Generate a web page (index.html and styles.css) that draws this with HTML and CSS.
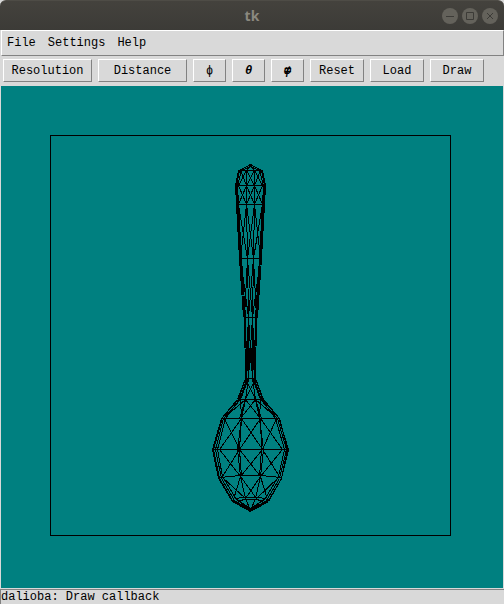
FILE: index.html
```html
<!DOCTYPE html>
<html lang="en">
<head>
<meta charset="utf-8">
<title>tk</title>
<link rel="stylesheet" href="styles.css">
</head>
<body>
<header class="titlebar">
  <h1 class="title">tk</h1>
  <div class="window-controls">
    <button class="control" type="button" aria-label="Minimize"><svg viewBox="0 0 16 16"><path d="M4 8.500H12"/></svg></button>
    <button class="control" type="button" aria-label="Maximize"><svg viewBox="0 0 16 16"><path d="M4.500 4.500H11.500V11.500H4.500Z"/></svg></button>
    <button class="control" type="button" aria-label="Close"><svg viewBox="0 0 16 16"><path d="M5 5L11 11M11 5L5 11"/></svg></button>
  </div>
</header>
<nav class="menubar">
  <button class="menu" type="button">File</button>
  <button class="menu" type="button">Settings</button>
  <button class="menu" type="button">Help</button>
</nav>
<div class="toolbar">
  <button class="tool wide" type="button">Resolution</button>
  <button class="tool wide" type="button">Distance</button>
  <button class="tool narrow" type="button">ϕ</button>
  <button class="tool narrow slanted" type="button">θ</button>
  <button class="tool narrow slanted" type="button"><span class="stack"><span>φ</span><span>≠</span></span></button>
  <button class="tool" type="button">Reset</button>
  <button class="tool" type="button">Load</button>
  <button class="tool" type="button">Draw</button>
</div>
<main class="canvas">
  <svg class="drawing" viewBox="1 86 502 502" role="img" aria-label="Wireframe spoon">
    <rect x="50.500" y="135.500" width="400" height="400"/>
    <!-- handle outlines -->
    <path d="M250.500 164.500L239.500 170.500L236.500 185.500L237.500 204.500L240.500 258.500L244.500 317.500L245.500 378.500"/>
    <path d="M250.500 166.500L241.500 170.500L237.500 185.500L238.500 204.500L241.500 258.500L245.500 317.500L246.500 378.500"/>
    <path d="M238.500 170.500L235.500 185.500L236.500 204.500L239.500 258.500L243.500 317.500"/>
    <path d="M250.500 164.500L261.500 170.500L264.500 185.500L263.500 204.500L260.500 258.500L256.500 317.500L255.500 378.500"/>
    <path d="M250.500 166.500L259.500 170.500L263.500 185.500L262.500 204.500L259.500 258.500L255.500 317.500L254.500 378.500"/>
    <path d="M262.500 170.500L265.500 185.500L264.500 204.500L261.500 258.500L257.500 317.500"/>
    <!-- handle rings -->
    <path d="M239 170.500H262M236 185.500H265M237 204.500H265M240 258.500H262M244 317.500H258M245 378.500H256"/>
    <!-- handle columns -->
    <path d="M250.500 165.500L246.500 170.500V204.500L247.500 258.500L248.500 317.500V378.500M250.500 165.500L254.500 170.500V204.500L253.500 258.500L252.500 317.500V378.500"/>
    <!-- handle cross lines -->
    <path d="M240.500 170.500L246.500 185.500L238.500 204.500M246.500 170.500L238.500 185.500L246.500 204.500M246.500 170.500L254.500 185.500L246.500 204.500M254.500 170.500L246.500 185.500L254.500 204.500M254.500 170.500L262.500 185.500L254.500 204.500M260.500 170.500L254.500 185.500L262.500 204.500"/>
    <path d="M238.500 204.500L247.500 258.500L244.500 317.500L248.500 378.500M246.500 204.500L240.500 258.500L248.500 317.500L245.500 378.500M246.500 204.500L253.500 258.500L248.500 317.500L252.500 378.500M254.500 204.500L247.500 258.500L252.500 317.500L248.500 378.500M254.500 204.500L260.500 258.500L252.500 317.500L255.500 378.500M262.500 204.500L253.500 258.500L256.500 317.500L252.500 378.500"/>
    <path d="M246 348H255V362H246Z" fill="#000"/>
    <!-- bowl outlines -->
    <path d="M245.500 378.500L238.500 399.500L222.500 417.500L213.500 449.500L219.500 478.500L232.500 500.500L250.500 510.500"/>
    <path d="M246.500 378.500L240.500 399.500L223.500 418.500L215.500 449.500L221.500 478.500L234.500 500.500L250.500 510.500"/>
    <path d="M247.500 378.500L239.500 399.500L225.500 418.500L217.500 449.500L222.500 476.500L236.500 499.500L250.500 508.500"/>
    <path d="M245.500 378.500L237.500 399.500L221.500 418.500L212.500 449.500L218.500 478.500L232.500 501.500L250.500 511.500"/>
    <path d="M255.500 378.500L262.500 399.500L278.500 417.500L288.500 449.500L281.500 478.500L268.500 500.500L250.500 510.500"/>
    <path d="M254.500 378.500L260.500 399.500L277.500 418.500L286.500 449.500L279.500 478.500L266.500 500.500L250.500 510.500"/>
    <path d="M253.500 378.500L261.500 399.500L275.500 418.500L284.500 449.500L278.500 476.500L264.500 499.500L250.500 508.500"/>
    <path d="M255.500 378.500L263.500 399.500L279.500 418.500L287.500 449.500L281.500 478.500L268.500 501.500L250.500 511.500"/>
    <!-- bowl rings -->
    <path d="M239 399.500H263M222 418.500H279M213 449.500H289M240 475.500H261M220 477.500L240 475.500M261 475.500L281 477.500M236 498.500L243 497.500H258L265 498.500M238 501.500L244 499.500H257L263 501.500"/>
    <!-- bowl columns -->
    <path d="M248.500 378.500L245.500 399.500L241.500 418.500L237.500 449.500L240.500 476.500L245.500 498.500L250.500 510.500M241.500 418.500L239.500 449.500L241.500 476.500"/>
    <path d="M252.500 378.500L255.500 399.500L259.500 418.500L263.500 449.500L260.500 476.500L255.500 498.500L250.500 510.500M260.500 418.500L261.500 449.500L259.500 476.500"/>
    <path d="M245.500 399.500L239.500 418.500M255.500 399.500L261.500 418.500"/>
    <!-- bowl cross lines -->
    <path d="M245.500 378.500L255.500 399.500M255.500 378.500L245.500 399.500M248.500 378.500L240.500 399.500L241.500 418.500M252.500 378.500L260.500 399.500L259.500 418.500M245.500 399.500L223.500 418.500M245.500 399.500L260.500 418.500M255.500 399.500L240.500 418.500M255.500 399.500L277.500 418.500"/>
    <path d="M224.500 418.500L239.500 449.500L222.500 476.500M241.500 418.500L219.500 449.500L240.500 476.500M241.500 418.500L262.500 449.500L240.500 476.500M260.500 418.500L239.500 449.500L260.500 476.500M260.500 418.500L282.500 449.500L260.500 476.500M276.500 418.500L262.500 449.500L279.500 476.500"/>
    <path d="M222.500 477.500L245.500 498.500M240.500 476.500L233.500 499.500M240.500 476.500L256.500 498.500M260.500 476.500L245.500 498.500M278.500 477.500L256.500 498.500M260.500 476.500L267.500 499.500M236.500 498.500L250.500 510.500L264.500 498.500M241.500 503.500L250.500 510.500L259.500 503.500"/>
  </svg>
</main>
<footer class="status">dalioba: Draw callback</footer>
</body>
</html>
```
FILE: styles.css
```css
* { box-sizing: border-box; }

body {
  margin: 0;
  min-height: 100vh;
  display: flex;
  flex-direction: column;
  background: #d9d9d9;
  color: #000;
  font: 12px/14px "Liberation Mono", "DejaVu Sans Mono", monospace;
}

button { font: inherit; color: inherit; padding: 0; }

.titlebar {
  height: 30px;
  display: grid;
  grid-template-columns: 1fr auto 1fr;
  align-items: center;
  padding: 0 6px;
  border-radius: 6px 6px 0 0;
  border-top: 1px solid #4e4c46;
  background: linear-gradient(#44423d, #3c3b37);
}

.title {
  grid-column: 2;
  margin: 0;
  font: bold 14px/18px "Noto Sans", sans-serif;
  color: #8b887f;
}

.window-controls { display: flex; justify-content: flex-end; gap: 4px; }

.control {
  width: 16px;
  height: 16px;
  border: 0;
  border-radius: 50%;
  background: #64625b;
}

.control svg {
  display: block;
  fill: none;
  stroke: #3c3b37;
  stroke-width: 1;
}

.menubar {
  height: 26px;
  display: flex;
  align-items: center;
  gap: 12px;
  margin-left: 1px;
  padding-left: 5px;
  border: 1px solid;
  border-color: #fff #828282 #828282 #fff;
}

.menu { border: 0; background: none; }

.toolbar {
  height: 30px;
  display: flex;
  align-items: flex-start;
  gap: 6px;
  padding: 3px;
}

.tool {
  width: 54px;
  height: 23px;
  border: 1px solid;
  border-color: #fff #828282 #828282 #fff;
  background: #d9d9d9;
  white-space: nowrap;
}

.wide { width: 89px; }
.narrow { width: 33px; }
.slanted { font-weight: bold; font-style: italic; }

.stack { display: inline-grid; }
.stack span { grid-area: 1 / 1; }

.canvas {
  flex: 1;
  display: flex;
  margin: 0 1px;
  background: #008080;
}

.drawing {
  width: 100%;
  fill: none;
  stroke: #000;
  stroke-width: 1;
  shape-rendering: crispEdges;
}

.status {
  margin-top: 1px;
  border-top: 1px solid #828282;
  border-left: 1px solid #828282;
}
```
